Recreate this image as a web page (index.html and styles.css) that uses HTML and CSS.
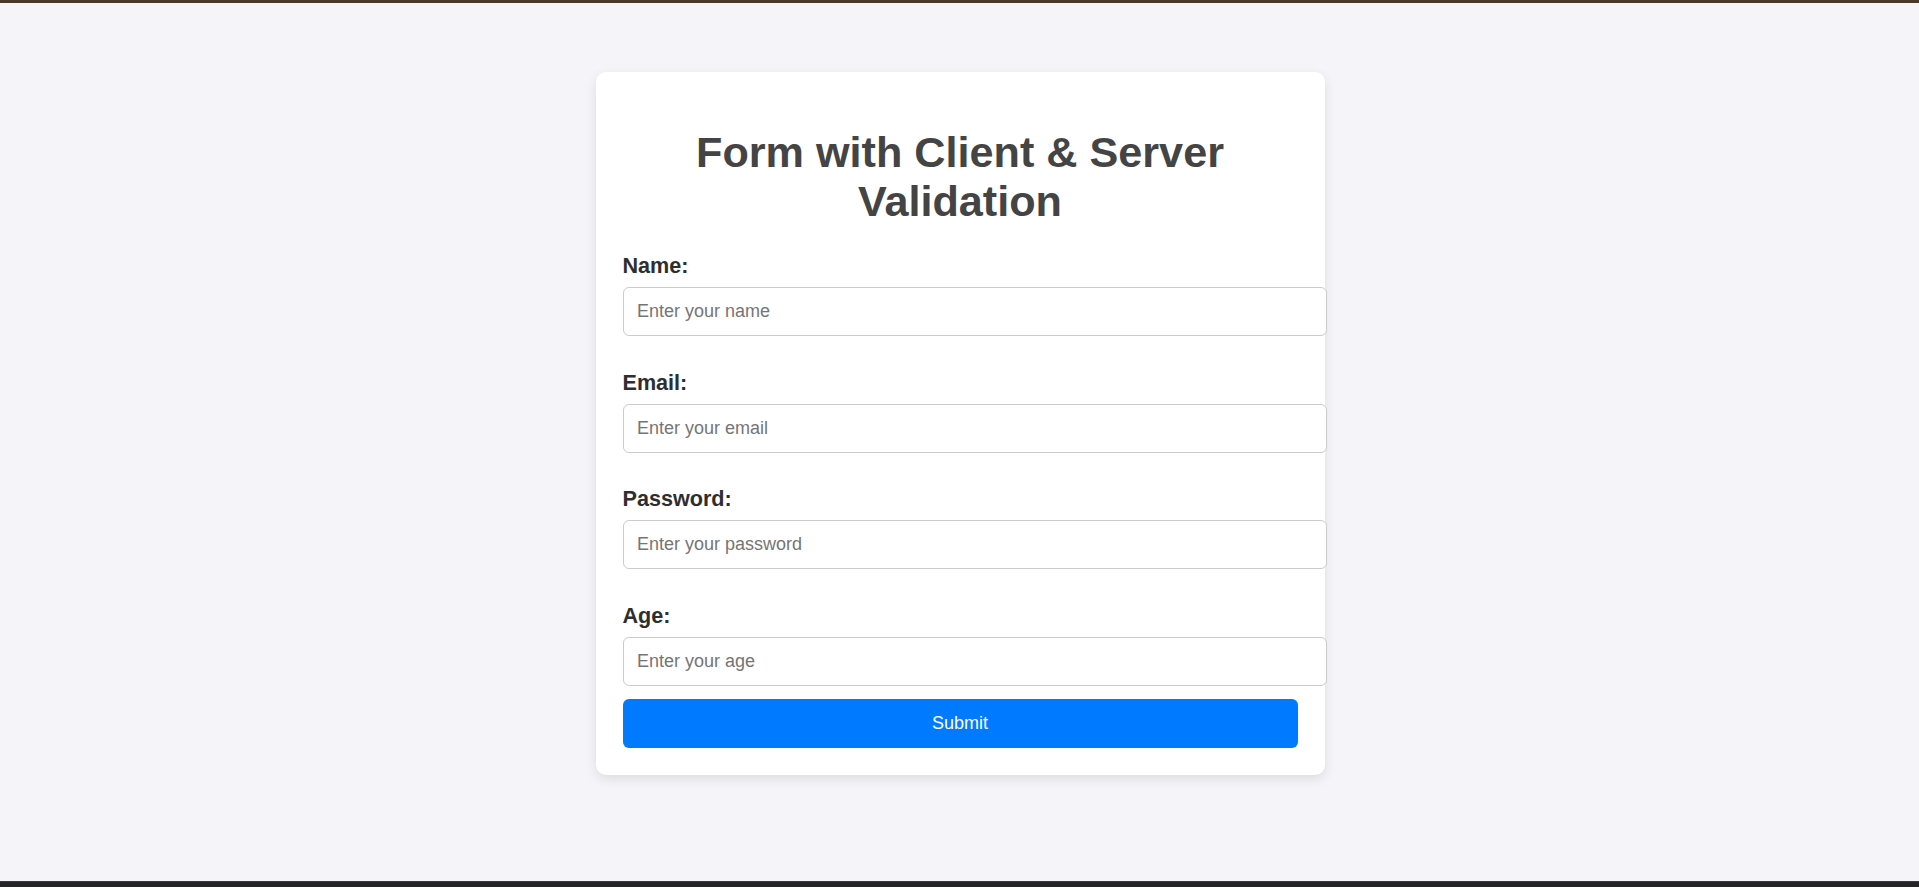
FILE: index.html
```html
<!DOCTYPE html>
<html lang="en">
<head>
<meta charset="utf-8">
<title>Form with Client &amp; Server Validation</title>
<link rel="stylesheet" href="styles.css">
</head>
<body>
<div class="top-bar"></div>
<main class="page">
  <div class="card">
    <h1 class="title">Form with Client &amp; Server Validation</h1>
    <form class="form" onsubmit="return false;">
      <div class="group">
        <label class="label" for="name">Name:</label>
        <input class="field" id="name" type="text" placeholder="Enter your name">
      </div>
      <div class="group">
        <label class="label" for="email">Email:</label>
        <input class="field" id="email" type="email" placeholder="Enter your email">
      </div>
      <div class="group">
        <label class="label" for="password">Password:</label>
        <input class="field" id="password" type="password" placeholder="Enter your password">
      </div>
      <div class="group group-last">
        <label class="label" for="age">Age:</label>
        <input class="field" id="age" type="number" placeholder="Enter your age">
      </div>
      <button class="submit" type="submit">Submit</button>
    </form>
  </div>
</main>
<div class="bottom-bar"></div>
</body>
</html>
```
FILE: styles.css
```css
html, body {
  margin: 0;
  padding: 0;
  height: 100%;
}
body {
  display: flex;
  flex-direction: column;
  background: #f4f4f9;
  font-family: "Liberation Sans", Arial, sans-serif;
  overflow: hidden;
}
.top-bar {
  height: 3px;
  flex: 0 0 3px;
  background: #4a392b;
}
.bottom-bar {
  flex: 0 0 6px;
  height: 6px;
  background: #242424;
  border-top: 1px solid #3a3a3a;
  box-sizing: border-box;
}
.page {
  flex: 1;
  display: flex;
  justify-content: center;
  align-items: flex-start;
  padding-top: 69px;
  padding-left: 1px;
}
.card {
  width: 675px;
  padding: 27px;
  background: #ffffff;
  border-radius: 10px;
  box-shadow: 0 4px 12px rgba(0, 0, 0, 0.1);
}
.title {
  margin: 29.3px 0 29.4px;
  font-size: 43.2px;
  line-height: 48.3px;
  font-weight: bold;
  color: #444444;
  text-align: center;
}
.form {
  display: flex;
  flex-direction: column;
}
.group {
  display: flex;
  flex-direction: column;
  margin-bottom: 34.6px;
}
.group-last {
  margin-bottom: 13.2px;
}
.label {
  display: block;
  font-size: 21.6px;
  line-height: 23px;
  font-weight: bold;
  color: #2e2e2e;
  margin-bottom: 10px;
}
.field {
  height: 49px;
  box-sizing: border-box;
  width: calc(100% + 29px);
  padding: 0 13.5px;
  border: 1px solid #cccccc;
  border-radius: 6px;
  font-family: "Liberation Sans", Arial, sans-serif;
  font-size: 18px;
  color: #333333;
  background: #ffffff;
  outline: none;
}
.field::placeholder {
  color: #757575;
}
.submit {
  width: 100%;
  height: 48.4px;
  border: none;
  border-radius: 6px;
  background: #007bff;
  color: #ffffff;
  font-family: "Liberation Sans", Arial, sans-serif;
  font-size: 18px;
  cursor: pointer;
}
```
